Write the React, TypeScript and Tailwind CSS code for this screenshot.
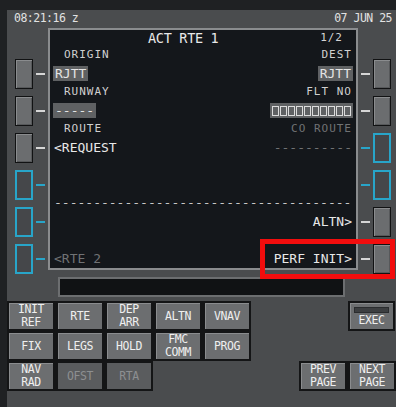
import React from "react";

function Lsk({ cyan }: { cyan?: boolean }) {
  return cyan ? (
    <div className="h-[30px] w-[18px] border-2 border-[#28a5c9] bg-[#45474a]" />
  ) : (
    <div className="h-[30px] w-[18px] border border-[#111213] bg-[#6b6d6f] shadow-[inset_1px_1px_0_#8a8c8e,inset_-1px_-1px_0_#56585a]" />
  );
}

function LeftLsk({ cyan }: { cyan?: boolean }) {
  return (
    <div className="flex h-[30px] items-center gap-[3px]">
      <Lsk cyan={cyan} />
      <div className={cyan ? "h-[2px] w-[9px] bg-[#28a5c9]" : "h-[2px] w-[9px] bg-[#d6d6d6]"} />
    </div>
  );
}

function RightLsk({ cyan }: { cyan?: boolean }) {
  return (
    <div className="flex h-[30px] items-center gap-[3px]">
      <div className={cyan ? "h-[2px] w-[9px] bg-[#28a5c9]" : "h-[2px] w-[9px] bg-[#d6d6d6]"} />
      <Lsk cyan={cyan} />
    </div>
  );
}

function Key({ l1, l2, dim }: { l1: string; l2?: string; dim?: boolean }) {
  return (
    <div
      className={`flex h-[30px] w-[48px] flex-col items-center justify-center border-2 border-[#141516] text-[11.5px] leading-[13px] tracking-[-0.4px] ${
        dim
          ? "bg-[#5a5c5e] text-[#8d8f91]"
          : "bg-[#6c6e70] text-[#efefef] shadow-[inset_1px_1px_0_#8a8c8e]"
      }`}
    >
      <span>{l1}</span>
      {l2 && <span>{l2}</span>}
    </div>
  );
}

export default function App() {
  return (
    <div className="relative h-[407px] w-[396px] overflow-hidden bg-[#1f2123] font-['DejaVu_Sans_Mono',monospace]">
      <div className="ml-[7px] mt-[10px] h-[397px] bg-[#4a4c4e]">
        {/* header */}
        <div className="flex h-[18px] items-center px-[7px] pr-[4px] text-[11.5px] tracking-[-0.5px] text-[#e2e2e2]">
          <span>08:21:16 z</span>
          <span className="ml-auto">07 JUN 25</span>
        </div>

        {/* screen + line select keys */}
        <div className="flex">
          <div className="flex w-[41px] flex-col gap-[7px] pl-[8px] pt-[31px]">
            <LeftLsk />
            <LeftLsk />
            <LeftLsk />
            <LeftLsk cyan />
            <LeftLsk cyan />
            <LeftLsk cyan />
          </div>

          <div className="flex h-[242px] w-[310px] flex-col border-2 border-[#8a8c8e] bg-[#14171b] px-[4px] text-[13px] text-[#e8e8e8]">
            <div className="flex h-[16px] items-center">
              <span className="ml-[94px] text-[13.5px] tracking-[-0.3px]">ACT RTE 1</span>
              <span className="ml-auto mr-[9px] text-[11px] tracking-[1px] text-[#d4d4d4]">1/2</span>
            </div>

            <div className="flex h-[18px] items-center text-[11px] tracking-[1px] text-[#d0d0d0]">
              <span className="pl-[10px]">ORIGIN</span>
              <span className="ml-auto">DEST</span>
            </div>
            <div className="flex h-[19px] items-center">
              <span className="-ml-[1px] bg-[#5f6163] px-[2px] leading-[15px] text-[#e4e4e4]">RJTT</span>
              <span className="-mr-[1px] ml-auto bg-[#5f6163] px-[2px] leading-[15px] text-[#e4e4e4]">RJTT</span>
            </div>

            <div className="flex h-[18px] items-center text-[11px] tracking-[1px] text-[#d0d0d0]">
              <span className="pl-[10px]">RUNWAY</span>
              <span className="ml-auto">FLT NO</span>
            </div>
            <div className="flex h-[19px] items-center">
              <span className="-ml-[1px] bg-[#5f6163] px-[2px] leading-[15px] text-[#e4e4e4]">-----</span>
              <span className="-mr-[1px] ml-auto flex h-[15px] items-center gap-[1px] bg-[#5f6163] px-[2px]">
                {Array.from({ length: 10 }).map((_, i) => (
                  <span key={i} className="h-[10px] w-[7px] border border-[#dcdcdc]" />
                ))}
              </span>
            </div>

            <div className="flex h-[18px] items-center text-[11px] tracking-[1px] text-[#d0d0d0]">
              <span className="pl-[10px]">ROUTE</span>
              <span className="ml-auto text-[#707274]">CO ROUTE</span>
            </div>
            <div className="flex h-[19px] items-center">
              <span>&lt;REQUEST</span>
              <span className="ml-auto text-[#707274]">----------</span>
            </div>

            <div className="h-[18px]" />
            <div className="h-[19px]" />

            <div className="flex h-[18px] items-center whitespace-nowrap text-[#c8c8c8]">
              <span>--------------------------------------</span>
            </div>
            <div className="flex h-[19px] items-center">
              <span className="ml-auto">ALTN&gt;</span>
            </div>

            <div className="h-[18px]" />
            <div className="flex h-[19px] items-center">
              <span className="text-[#707274]">&lt;RTE 2</span>
              <span className="ml-auto">PERF INIT&gt;</span>
            </div>
          </div>

          <div className="flex w-[38px] flex-col gap-[7px] pl-[3px] pt-[31px]">
            <RightLsk />
            <RightLsk />
            <RightLsk cyan />
            <RightLsk cyan />
            <RightLsk />
            <RightLsk />
          </div>
        </div>

        {/* scratchpad */}
        <div className="ml-[51px] mt-[3px] h-[20px] w-[287px] border-2 border-[#6c6e70] bg-[#101214]" />

        {/* function keys */}
        <div className="mt-[4px] flex">
          <div className="flex flex-col">
            <div className="flex w-fit gap-[1px] bg-[#141516]">
              <Key l1="INIT" l2="REF" />
              <Key l1="RTE" />
              <Key l1="DEP" l2="ARR" />
              <Key l1="ALTN" />
              <Key l1="VNAV" />
            </div>
            <div className="flex w-fit gap-[1px] bg-[#141516]">
              <Key l1="FIX" />
              <Key l1="LEGS" />
              <Key l1="HOLD" />
              <Key l1="FMC" l2="COMM" />
              <Key l1="PROG" />
            </div>
            <div className="flex w-fit gap-[1px] bg-[#141516]">
              <Key l1="NAV" l2="RAD" />
              <Key l1="OFST" dim />
              <Key l1="RTA" dim />
            </div>
          </div>

          <div className="ml-auto flex flex-col items-end">
            <div className="mr-[1px] flex h-[30px] w-[47px] flex-col items-center border-2 border-[#141516] bg-[#6c6e70] pt-[4px] text-[11.5px] leading-[13px] tracking-[-0.4px] text-[#efefef] shadow-[inset_1px_1px_0_#8a8c8e]">
              <div className="h-[6px] w-[35px] border border-[#2a2c2e] bg-[#3c3e40]" />
              <span className="mt-[1px]">EXEC</span>
            </div>
            <div className="h-[30px]" />
            <div className="flex gap-[1px] bg-[#141516]">
              <Key l1="PREV" l2="PAGE" />
              <Key l1="NEXT" l2="PAGE" />
            </div>
          </div>
        </div>
      </div>

      {/* highlight annotation */}
      <div className="absolute left-[260px] top-[239px] h-[40px] w-[135px] border-[5px] border-[#f20d0d]" />
    </div>
  );
}
